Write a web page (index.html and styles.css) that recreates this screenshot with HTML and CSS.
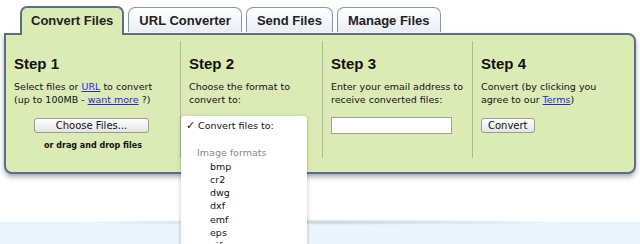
FILE: index.html
```html
<!DOCTYPE html>
<html lang="en">

<head>
    <meta charset="UTF-8">
    <title>Convert Files</title>
    <link rel="stylesheet" href="styles.css">
</head>

<body>
    <div class="converter">
        <!-- Tabs -->
        <ul class="tabs">
            <li class="tab active">Convert Files</li>
            <li class="tab">URL Converter</li>
            <li class="tab">Send Files</li>
            <li class="tab">Manage Files</li>
        </ul>

        <div class="panel">
            <div class="step step-1">
                <h2>Step 1</h2>
                <p>Select files or <a href="#">URL</a> to convert<br>(up to 100MB - <a href="#">want more</a> ?)</p>
                <div class="center">
                    <button class="btn btn-wide">Choose Files...</button>
                    <div class="drop-hint">or drag and drop files</div>
                </div>
            </div>

            <div class="step step-2">
                <h2>Step 2</h2>
                <p>Choose the format to<br>convert to:</p>

                <!-- open select menu -->
                <div class="menu">
                    <div class="menu-item checked"><span class="check">&#10003;</span>Convert files to:</div>
                    <div class="menu-group">Image formats</div>
                    <div class="menu-item sub">bmp</div>
                    <div class="menu-item sub">cr2</div>
                    <div class="menu-item sub">dwg</div>
                    <div class="menu-item sub">dxf</div>
                    <div class="menu-item sub">emf</div>
                    <div class="menu-item sub">eps</div>
                    <div class="menu-item sub">gif</div>
                </div>
            </div>

            <div class="step step-3">
                <h2>Step 3</h2>
                <p>Enter your email address to<br>receive converted files:</p>
                <input type="text" class="email">
            </div>

            <div class="step step-4">
                <h2>Step 4</h2>
                <p>Convert (by clicking you<br>agree to our <a href="#">Terms</a>)</p>
                <button class="btn">Convert</button>
            </div>
        </div>
    </div>

    <div class="band"></div>
</body>

</html>
```

FILE: styles.css
```css
body {
    margin: 0;
    background: #fff;
    font-family: "DejaVu Sans", Verdana, sans-serif;
    font-size: 9.5px;
    color: #111;
    overflow: hidden;
}

.converter {
    padding: 7px 4px 0 4px;
}

.tabs {
    display: flex;
    gap: 4px;
    list-style: none;
    margin: 0 0 0 16px;
    padding: 0;
    position: relative;
    z-index: 2;
}

.tab {
    height: 24px;
    line-height: 25px;
    padding: 0 10px;
    font-family: "Liberation Sans", Arial, sans-serif;
    font-weight: bold;
    font-size: 13px;
    color: #222;
    border: 1px solid #8496ad;
    border-bottom: none;
    border-radius: 7px 7px 0 0;
    background: linear-gradient(#ffffff, #e9eef4);
}

.tab.active {
    background: #dcebb5;
    border: 2px solid #5d6d83;
    border-bottom: none;
    height: 25px;
    margin-top: -1px;
    padding: 0 9px;
    line-height: 26px;
    position: relative;
}

.tab.active::after {
    content: "";
    position: absolute;
    left: 0;
    right: 0;
    bottom: -2px;
    height: 3px;
    background: #dcebb5;
}

.panel {
    position: relative;
    display: flex;
    height: 141px;
    background: #dcebb5;
    border: 2px solid #5d6d83;
    border-radius: 0 8px 8px 8px;
    box-shadow: 0 3px 5px rgba(60, 70, 90, 0.45);
    padding: 6px 0 14px 0;
    box-sizing: border-box;
}

.step {
    position: relative;
    padding: 0 8px;
    border-right: 1px solid #adb99a;
    box-sizing: border-box;
}

.step:last-child {
    border-right: none;
}

.step-1 { width: 175px; }
.step-2 { width: 142px; }
.step-3 { width: 150px; }
.step-4 { flex: 1; }

h2 {
    margin: 14px 0 8px 0;
    font-family: "Liberation Sans", Arial, sans-serif;
    font-size: 15px;
    font-weight: bold;
}

p {
    margin: 0;
    line-height: 13px;
    white-space: nowrap;
}

a {
    color: #2a2ad0;
}

.center {
    text-align: center;
}

.btn {
    font-family: "DejaVu Sans", Verdana, sans-serif;
    font-size: 10px;
    color: #111;
    background: linear-gradient(#ffffff, #e4e4e4);
    border: 1px solid #9a9a9a;
    border-radius: 3px;
    padding: 0 6px;
    height: 15px;
    margin-top: 12px;
}

.btn-wide {
    width: 115px;
    margin-right: 3px;
}

.drop-hint {
    font-weight: bold;
    font-size: 8px;
    margin-top: 8px;
}

.email {
    display: block;
    width: 121px;
    height: 17px;
    box-sizing: border-box;
    margin-top: 11px;
    border: 1px solid #a0a0a0;
    background: #fff;
}

.menu {
    position: absolute;
    left: 0;
    top: 75px;
    width: 126px;
    height: 140px;
    padding-top: 3px;
    overflow: hidden;
    font-size: 9.5px;
    background: #fff;
    border-radius: 4px 4px 0 0;
    box-shadow: 0 1px 4px rgba(0, 0, 0, 0.25);
    z-index: 5;
}

.menu-item {
    line-height: 13.3px;
    padding-left: 29px;
}

.menu-item.checked {
    padding-left: 17px;
    margin-bottom: 14px;
}

.check {
    display: inline-block;
    width: 12px;
    margin-left: -12px;
    font-size: 11px;
    font-weight: bold;
}

.menu-group {
    color: #8a8a8a;
    padding-left: 16px;
    line-height: 13.3px;
}

.band {
    position: relative;
    margin-top: 48px;
    height: 40px;
    background: #edf5fc;
}

.band::before {
    content: "";
    position: absolute;
    left: 60px;
    right: 60px;
    top: -3px;
    height: 6px;
    background: radial-gradient(ellipse at center, rgba(120, 130, 140, 0.35), rgba(255, 255, 255, 0) 70%);
}
```
